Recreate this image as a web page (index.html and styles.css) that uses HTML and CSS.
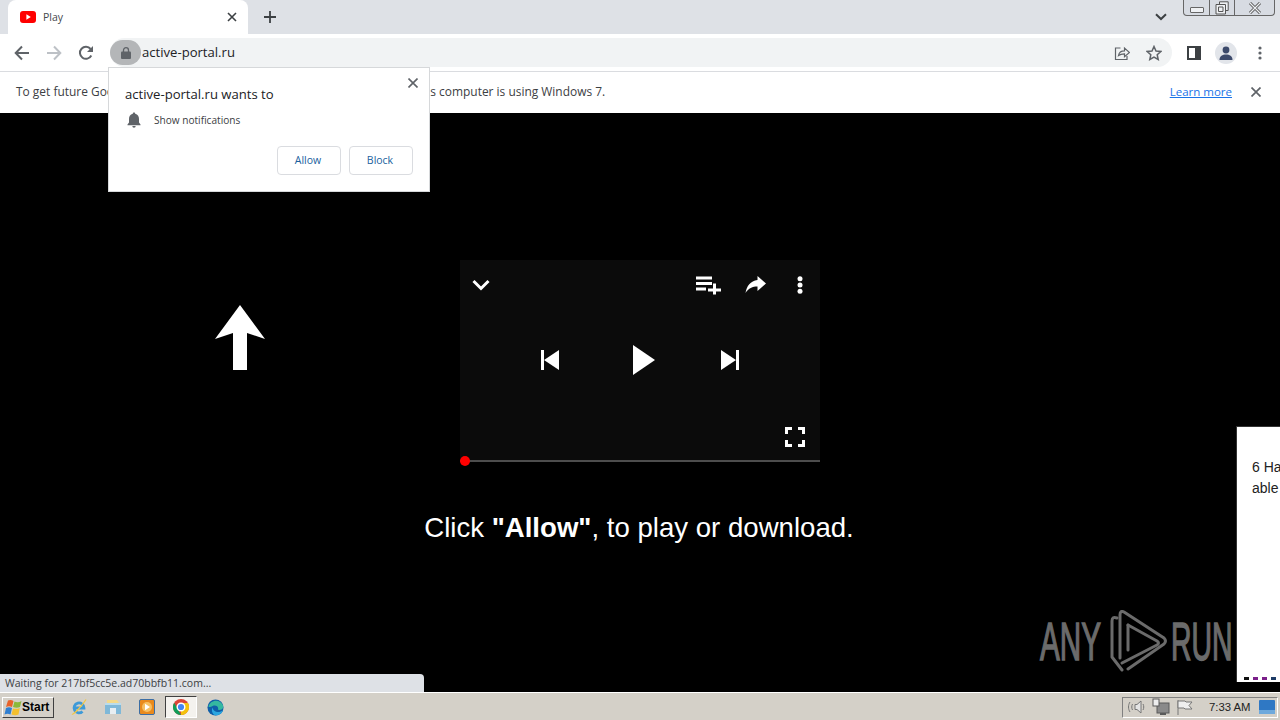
FILE: index.html
```html
<!DOCTYPE html>
<html lang="en">
<head>
    <meta charset="UTF-8">
    <title>Play</title>
    <link rel="stylesheet" href="styles.css">
</head>
<body>
    <!-- Tab strip -->
    <div class="tabstrip">
        <div class="tab">
            <svg class="tab-logo" width="16" height="12" viewBox="0 0 16 12"><rect width="16" height="12" rx="3" fill="#f00"/><path d="M6.400 3.200 10.800 6 6.400 8.800z" fill="#fff"/></svg>
            <span class="tab-title">Play</span>
            <svg class="tab-close" width="10" height="10" viewBox="0 0 10 10"><path d="M1 1l8 8M9 1 1 9" stroke="#3c4043" stroke-width="1.600"/></svg>
        </div>
        <svg class="new-tab" width="12" height="12" viewBox="0 0 12 12"><path d="M6 0v12M0 6h12" stroke="#3c4043" stroke-width="1.800"/></svg>
        <svg class="tab-search" width="12" height="8" viewBox="0 0 12 8"><path d="M1 1.200 6 6l5-4.800" fill="none" stroke="#3c4043" stroke-width="2"/></svg>
        <div class="win-controls">
            <span class="win-btn win-min"><i></i></span>
            <span class="win-btn win-max">
                <svg width="14" height="14" viewBox="0 0 14 14"><path d="M4.500 3V.8h8.700v8.700H11M1 3.500h9.500V13H1zM3.500 6h4.500v4.500H3.500z" fill="#eef0f3" stroke="#555"/></svg>
            </span>
            <span class="win-btn win-close">
                <svg width="14" height="12" viewBox="0 0 14 12"><path d="M2 1l10 10M12 1 2 11" stroke="#555" stroke-width="3"/><path d="M2 1l10 10M12 1 2 11" stroke="#eef0f3" stroke-width="1.200"/></svg>
            </span>
        </div>
    </div>

    <!-- Toolbar -->
    <div class="toolbar">
        <svg class="nav-icon" width="16" height="16" viewBox="0 0 16 16"><path d="M15 8H2M8 1.500 1.700 8 8 14.500" fill="none" stroke="#5f6368" stroke-width="2"/></svg>
        <svg class="nav-icon" width="16" height="16" viewBox="0 0 16 16"><path d="M1 8h13M8 1.500 14.300 8 8 14.500" fill="none" stroke="#bdc1c6" stroke-width="2"/></svg>
        <svg class="nav-icon" width="16" height="16" viewBox="0 0 16 16"><path d="M13.300 10.500A6 6 0 1 1 12.600 4" fill="none" stroke="#5f6368" stroke-width="2"/><path d="M15 1v6H9z" fill="#5f6368"/></svg>
        <div class="omnibox">
            <span class="lock-chip">
                <svg width="10" height="12" viewBox="0 0 10 12"><path d="M2.500 5V3.200a2.500 2.500 0 0 1 5 0V5" fill="none" stroke="#5f6368" stroke-width="1.300"/><rect y="4.600" width="10" height="7.400" rx="1" fill="#5f6368"/></svg>
            </span>
            <span class="url">active-portal.ru</span>
            <svg class="omni-icon" width="16" height="16" viewBox="0 0 16 16"><path d="M6.500 3H1.500v11.500H13V11" fill="none" stroke="#5f6368" stroke-width="1.200"/><path d="M4.500 10.500C5 7.500 7.500 5.800 10.500 5.800V3l5 4.500-5 4.200V8.800c-2.500 0-4.500.4-6 1.700z" fill="none" stroke="#5f6368" stroke-width="1.200"/></svg>
            <svg class="omni-icon" width="16" height="16" viewBox="0 0 16 16"><path d="M8 1.500 10 6l4.800.5-3.600 3.200 1 4.800L8 12l-4.200 2.500 1-4.800L1.200 6.500 6 6z" fill="none" stroke="#5f6368" stroke-width="1.500"/></svg>
        </div>
        <svg class="side-icon" width="14" height="14" viewBox="0 0 14 14"><rect width="14" height="14" fill="#3c4043"/><rect x="2" y="2" width="6" height="10" fill="#fff"/></svg>
        <span class="avatar">
            <svg width="16" height="16" viewBox="0 0 16 16"><circle cx="8" cy="5" r="3.400" fill="#3c4a6b"/><path d="M1.500 15c0-4 3-5.500 6.500-5.500s6.500 1.500 6.500 5.500z" fill="#3c4a6b"/></svg>
        </span>
        <svg class="menu-dots" width="4" height="14" viewBox="0 0 4 14"><circle cx="2" cy="2" r="1.600" fill="#5f6368"/><circle cx="2" cy="7" r="1.600" fill="#5f6368"/><circle cx="2" cy="12" r="1.600" fill="#5f6368"/></svg>
    </div>

    <!-- Infobar -->
    <div class="infobar">
        <span class="info-text">To get future Google Chrome updates, you'll need Windows 10 or later. This computer is using Windows 7.</span>
        <a class="info-link" href="#">Learn more</a>
        <svg class="info-close" width="10" height="10" viewBox="0 0 10 10"><path d="M.5.500l9 9M9.500.500l-9 9" stroke="#5f6368" stroke-width="1.700"/></svg>
    </div>

    <!-- Page content -->
    <main class="stage">
        <div class="player">
            <div class="player-top">
                <svg width="18" height="12" viewBox="0 0 18 12"><path d="M1.500 2 9 9.500 16.500 2" fill="none" stroke="#fff" stroke-width="3"/></svg>
                <div class="player-actions">
                    <svg class="act-queue" width="26" height="20" viewBox="0 0 26 20"><path d="M1 1.500h16v3H1zM1 7h16v3H1zM1 12.500h10v3H1zM18 8.500h3v5h5v3h-5v3h-3v-3h-5v-3h5z" fill="#fff"/></svg>
                    <svg class="act-share" width="21" height="18" viewBox="0 0 21 18"><path d="M12.500 0 21 7.500l-8.500 7.500V10.500C7.500 10.500 3.500 12 .5 17 1.500 10 5.500 5 12.500 4z" fill="#fff"/></svg>
                    <svg width="6" height="18" viewBox="0 0 6 18"><circle cx="3" cy="2.700" r="2.500" fill="#fff"/><circle cx="3" cy="9" r="2.500" fill="#fff"/><circle cx="3" cy="15.300" r="2.500" fill="#fff"/></svg>
                </div>
            </div>
            <div class="player-mid">
                <svg width="18" height="20" viewBox="0 0 18 20"><path d="M0 0h3v20H0zM18 0v20L3 10z" fill="#fff"/></svg>
                <svg class="play-icon" width="22" height="30" viewBox="0 0 22 30"><path d="M0 0l22 15L0 30z" fill="#fff"/></svg>
                <svg width="18" height="20" viewBox="0 0 18 20"><path d="M18 0h-3v20h3zM0 0v20l15-10z" fill="#fff"/></svg>
            </div>
            <div class="player-bottom">
                <svg width="20" height="20" viewBox="0 0 20 20"><path d="M1.500 7V1.500H7M13 1.500h5.500V7M18.500 13v5.500H13M7 18.500H1.500V13" fill="none" stroke="#fff" stroke-width="3"/></svg>
            </div>
            <div class="seekbar"><span class="seek-dot"></span></div>
        </div>
        <p class="caption">Click <b>"Allow"</b>, to play or download.</p>

        <svg class="up-arrow" width="50" height="65" viewBox="0 0 50 65"><path d="M25 0 50 34 32 28V65H18V28L0 34z" fill="#fff"/></svg>

        <div class="side-card">
            <p>6 Ha<br>able</p>
            <div class="side-dashes"><i class="d1"></i><i class="d2"></i><i class="d2"></i><i class="d3"></i></div>
        </div>

        <div class="watermark">
            <span class="wm-text wm-any">ANY</span>
            <svg width="60" height="62" viewBox="0 0 60 62" fill="none" stroke="#6b6b6b" stroke-width="3" stroke-linejoin="round" stroke-linecap="round">
                <path d="M9 8Q4 6 4 11V47L14 60"/>
                <path d="M12 48V5Q12 0 16 2L56 28Q59 31 56 34L20 59"/>
                <path d="M20 15L49 31Q52 33 49 35L14 53"/>
                <path d="M20 15V40"/>
            </svg>
            <span class="wm-text wm-run">RUN</span>
        </div>

        <div class="status-bubble">Waiting for 217bf5cc5e.ad70bbfb11.com...</div>
    </main>

    <!-- Windows taskbar -->
    <div class="taskbar">
        <button class="start-btn">
            <svg width="18" height="17" viewBox="0 0 18 17"><path d="M4 1.500C6 .5 8 1 9.500 2L8 8C6 7 4 7 2 8z" fill="#e8622a"/><path d="M10.500 2.500C12.500 3.500 15 3.500 17.500 2L16 8C14 9 11.500 9 9 8z" fill="#8bb93a"/><path d="M2 9C4 8 6 8 8 9L6.500 15.500C4.500 14.500 2.500 14.500 .5 15.500z" fill="#2f7fd1"/><path d="M9 9.500C11 10 13.500 10 15.800 9L14.500 15.500C12.500 16.500 10 16.500 7.500 15.500z" fill="#f3c02f"/></svg>
            Start
        </button>
        <div class="quick-launch">
            <span class="task-item">
                <svg width="18" height="18" viewBox="0 0 18 18"><path d="M4.500 10h9.500A5 5 0 1 0 12.500 13.500" fill="none" stroke="#3e9ad8" stroke-width="2.800"/><path d="M2 16C3 17.500 12 8 16 1.500" fill="none" stroke="#f2c744" stroke-width="1.300"/></svg>
            </span>
            <span class="task-item">
                <svg width="18" height="18" viewBox="0 0 18 18"><path d="M3 2h10l2 3H3z" fill="#f3d98a"/><path d="M1 5h16v11H1z" fill="#7fb8d8"/><path d="M6 10h6v6H6z" fill="#e8eef2"/><path d="M1 5h16v2H1z" fill="#b9dcec"/></svg>
            </span>
            <span class="task-item">
                <svg width="16" height="16" viewBox="0 0 16 16"><rect x=".5" y=".5" width="15" height="15" rx="1.500" fill="#e98a1d" stroke="#3c6ea5"/><circle cx="8" cy="8" r="5" fill="#f7c063"/><path d="M6 4.800 11 8l-5 3.200z" fill="#fff"/></svg>
            </span>
            <span class="task-item task-active">
                <svg width="16" height="16" viewBox="0 0 16 16"><circle cx="8" cy="8" r="8" fill="#db4437"/><path d="M8 16A8 8 0 0 0 15 4H8z" fill="#f4c20d"/><path d="M1.200 3.800 5 10.500 8 16A8 8 0 0 1 1.200 3.800z" fill="#0f9d58"/><circle cx="8" cy="8" r="3.800" fill="#4285f4" stroke="#fff" stroke-width="1.400"/></svg>
            </span>
            <span class="task-item">
                <svg width="17" height="17" viewBox="0 0 18 18"><circle cx="9" cy="9" r="8.500" fill="#0f5ea8"/><path d="M1.500 8C3 1 14 -1 17 7c.8 3.500-2 5-5.500 4.500C13 8 9 6 6 7.500 4 8.500 3 9 1.500 8z" fill="#35b8a0"/><path d="M6 9c0 4 6 7 11 3-1 3-4 5.500-8 5.500C5 16 4.500 11 6 9z" fill="#2ca6e0"/></svg>
            </span>
        </div>
        <div class="tray">
            <svg width="18" height="16" viewBox="0 0 18 16" fill="none" stroke="#777"><path d="M7 5.500h2L13 2v12L9 10.500H7z" fill="#e4e4e4"/><path d="M15 5c1 2 1 4 0 6M4.500 5c-1 2-1 4 0 6M2 3c-2 3-2 7 0 10"/></svg>
            <svg width="18" height="18" viewBox="0 0 18 18"><rect x="5" y="5" width="12" height="10" fill="#8a8a8a" stroke="#5a5a5a"/><rect x="1" y="1" width="6" height="7" fill="#eee" stroke="#5a5a5a"/><path d="M8 15h6v2H8z" fill="#5a5a5a"/></svg>
            <svg width="17" height="17" viewBox="0 0 17 17" fill="#eee" stroke="#777"><path d="M2 1v15"/><path d="M2 2h7l1 1h6l-3 3.500 3 3.500H9L8 9H2z"/></svg>
            <span class="clock">7:33 AM</span>
            <svg width="16" height="14" viewBox="0 0 16 14"><rect width="16" height="14" rx="1" fill="#2f78c4"/><rect y="10" width="16" height="4" fill="#6ea9dc"/></svg>
        </div>
    </div>

    <!-- Notification prompt -->
    <div class="prompt">
        <svg class="prompt-close" width="10" height="10" viewBox="0 0 10 10"><path d="M.5.500l9 9M9.500.500l-9 9" stroke="#5f6368" stroke-width="1.600"/></svg>
        <div class="prompt-title">active-portal.ru wants to</div>
        <div class="prompt-row">
            <svg width="14" height="16" viewBox="0 0 14 16"><path d="M7 0.500c.8 0 1.200.5 1.200 1.200C11 2.300 12 4.500 12 7v3.500l1.500 2v.7H.5v-.7L2 10.500V7c0-2.500 1-4.700 3.800-5.300C5.800 1 6.200.5 7 .5z" fill="#5f6368"/><path d="M5.300 14h3.400a1.700 1.700 0 0 1-3.400 0z" fill="#5f6368"/></svg>
            <span>Show notifications</span>
        </div>
        <div class="prompt-actions">
            <button class="prompt-btn">Allow</button>
            <button class="prompt-btn">Block</button>
        </div>
    </div>
</body>
</html>
```

FILE: styles.css
```css
body {
    margin: 0;
    height: 720px;
    overflow: hidden;
    display: flex;
    flex-direction: column;
    position: relative;
    font-family: "Open Sans", "Noto Sans", sans-serif;
    background-color: #000;
}

/* Tab strip */
.tabstrip {
    height: 34px;
    flex: none;
    display: flex;
    align-items: center;
    background-color: #dee1e6;
}

.tab {
    width: 240px;
    height: 34px;
    margin-left: 8px;
    padding: 0 11px 0 12px;
    box-sizing: border-box;
    display: flex;
    align-items: center;
    background-color: #fff;
    border-radius: 8px 8px 0 0;
}

.tab-logo {
    flex: none;
}

.tab-title {
    flex: 1;
    margin-left: 7px;
    font-size: 10.500px;
    color: #45494d;
}

.new-tab {
    margin-left: 16px;
}

.tab-search {
    margin-left: auto;
    margin-right: 16px;
}

.win-controls {
    align-self: flex-start;
    width: 92px;
    height: 16px;
    margin-right: 5px;
    display: flex;
    box-sizing: border-box;
    border: 1px solid #666;
    border-top: none;
    border-radius: 0 0 4px 4px;
    background-color: #d7dbe2;
}

.win-btn {
    display: flex;
    align-items: center;
    justify-content: center;
    border-right: 1px solid #666;
    overflow: hidden;
}

.win-min {
    width: 25px;
}

.win-min i {
    width: 12px;
    height: 4px;
    margin-top: 5px;
    border: 1px solid #666;
    border-radius: 1px;
    background-color: #eef0f3;
}

.win-max {
    width: 24px;
}

.win-close {
    flex: 1;
    border-right: none;
}

/* Toolbar */
.toolbar {
    height: 37px;
    flex: none;
    box-sizing: border-box;
    padding-left: 14px;
    display: flex;
    align-items: center;
    background-color: #fff;
}

.nav-icon {
    flex: none;
    margin-right: 16px;
}

.omnibox {
    width: 1062px;
    height: 29px;
    display: flex;
    align-items: center;
    background-color: #f1f3f4;
    border-radius: 15px;
    position: relative;
}

.lock-chip {
    width: 31px;
    height: 25px;
    flex: none;
    display: flex;
    align-items: center;
    justify-content: center;
    background-color: #b4b6b8;
    border-radius: 13px;
}

.url {
    flex: 1;
    margin-left: 1px;
    padding-bottom: 2px;
    font-size: 13.100px;
    color: #202124;
}

.omni-icon {
    margin-right: 16px;
}

.omni-icon:last-child {
    margin-right: 10px;
}

.side-icon {
    margin-left: 15px;
}

.avatar {
    width: 22px;
    height: 22px;
    margin-left: 14px;
    display: flex;
    align-items: center;
    justify-content: center;
    background-color: #e2e5ea;
    border-radius: 50%;
}

.menu-dots {
    margin-left: 21px;
}

/* Infobar */
.infobar {
    height: 42px;
    flex: none;
    box-sizing: border-box;
    padding: 0 19px 2px 16px;
    display: flex;
    align-items: center;
    background-color: #fff;
    border-top: 1px solid #dadce0;
    font-size: 11.950px;
    color: #3c4043;
}

.info-text {
    flex: 1;
}

.info-link {
    color: #1a73e8;
    margin-right: 19px;
    font-size: 11.500px;
}

/* Page content */
.stage {
    flex: 1;
    position: relative;
    padding-top: 147px;
    background-color: #000;
}

.player {
    width: 360px;
    height: 202px;
    margin: 0 auto;
    display: flex;
    flex-direction: column;
    position: relative;
    background-color: #0b0b0b;
}

.player-top {
    height: 50px;
    box-sizing: border-box;
    padding: 0 17px 0 12px;
    display: flex;
    align-items: center;
    justify-content: space-between;
}

.player-actions {
    display: flex;
    align-items: center;
}

.act-queue {
    margin-right: 24px;
}

.act-share {
    margin-right: 31px;
}

.player-mid {
    height: 50px;
    margin-top: 25px;
    padding: 0 81px;
    display: flex;
    align-items: center;
    justify-content: space-between;
}

.play-icon {
    margin-left: 8px;
}

.player-bottom {
    margin-top: 42px;
    padding-right: 15px;
    display: flex;
    justify-content: flex-end;
}

.seekbar {
    position: absolute;
    left: 0;
    right: 0;
    bottom: 0;
    height: 2px;
    background-color: #4d4d4d;
}

.seek-dot {
    position: absolute;
    left: 0;
    top: -4px;
    width: 10px;
    height: 10px;
    background-color: #f00;
    border-radius: 50%;
}

.caption {
    margin: 50px 0 0;
    text-align: center;
    font-family: "Liberation Sans", Arial, sans-serif;
    font-size: 27.600px;
    line-height: 32px;
    color: #fff;
    transform: translateX(-1px);
}

.up-arrow {
    position: absolute;
    left: 215px;
    top: 192px;
}

.side-card {
    position: absolute;
    left: 1237px;
    right: 0;
    top: 313px;
    height: 256px;
    overflow: hidden;
    box-sizing: border-box;
    background-color: #fff;
    border-top: 1px solid #333;
    box-shadow: -1px 0 #333;
    font-family: "Liberation Sans", Arial, sans-serif;
    font-size: 14px;
    line-height: 21px;
    color: #222;
    white-space: nowrap;
}

.side-card p {
    margin: 30px 0 0 15px;
}

.side-dashes {
    position: absolute;
    left: 7px;
    bottom: 2px;
    display: flex;
    gap: 4px;
}

.side-dashes i {
    width: 5px;
    height: 3px;
}

.d1 {
    background-color: #111;
}

.d2 {
    background-color: #7b1f8a;
}

.d3 {
    background-color: #1d3b66;
}

/* Watermark */
.watermark {
    position: absolute;
    left: 1040px;
    top: 497px;
    display: flex;
    align-items: center;
    height: 62px;
}

.watermark svg {
    margin-left: 7px;
    margin-right: 3px;
}

.wm-text {
    width: 61px;
    font-family: "Liberation Sans", Arial, sans-serif;
    font-size: 53px;
    line-height: 62px;
    color: #6b6b6b;
    -webkit-text-stroke: 1.500px #6b6b6b;
    transform-origin: left center;
    white-space: nowrap;
}

.wm-any {
    transform: scaleX(.56) translateY(1px);
}

.wm-run {
    transform: scaleX(.535) translateY(1px);
}

.status-bubble {
    position: absolute;
    left: 0;
    bottom: 0;
    width: 424px;
    height: 18px;
    box-sizing: border-box;
    padding-left: 5px;
    background-color: #dee1e6;
    border-radius: 0 4px 0 0;
    font-size: 10.500px;
    line-height: 18px;
    color: #3c4043;
}

/* Taskbar */
.taskbar {
    height: 28px;
    flex: none;
    box-sizing: border-box;
    padding: 4px 2px 3px;
    display: flex;
    align-items: center;
    background-color: #d4d0c8;
    border-top: 1px solid #fff;
}

.start-btn {
    width: 52px;
    height: 21px;
    padding: 0 0 0 1px;
    display: flex;
    align-items: center;
    background-color: #d4d0c8;
    border: 1px solid;
    border-color: #fff #404040 #404040 #fff;
    font-family: "Liberation Sans", Arial, sans-serif;
    font-size: 12px;
    font-weight: bold;
    color: #000;
}

.quick-launch {
    margin-left: 11px;
    display: flex;
    gap: 6px;
}

.task-item {
    width: 28px;
    height: 22px;
    display: flex;
    align-items: center;
    justify-content: center;
}

.task-active {
    width: 32px;
    margin: 0 -2px;
    background-color: #f4f2ee;
    border: 1px solid;
    border-color: #404040 #fff #fff #404040;
    box-sizing: border-box;
}

.tray {
    width: 156px;
    height: 21px;
    margin-left: auto;
    box-sizing: border-box;
    padding: 0 2px 0 5px;
    display: flex;
    align-items: center;
    gap: 6px;
    border: 1px solid;
    border-color: #808080 #fff #fff #808080;
}

.clock {
    margin: 0 auto 0 10px;
    font-family: "Liberation Sans", Arial, sans-serif;
    font-size: 11.300px;
    color: #222;
}

/* Notification prompt */
.prompt {
    position: absolute;
    left: 108px;
    top: 67px;
    width: 322px;
    height: 125px;
    box-sizing: border-box;
    padding: 17px 16px 0 16px;
    background-color: #fff;
    border: 1px solid #d6d8da;
    color: #202124;
}

.prompt-close {
    position: absolute;
    top: 10px;
    right: 11px;
}

.prompt-title {
    font-size: 13.100px;
    line-height: 18px;
}

.prompt-row {
    margin-top: 9px;
    display: flex;
    align-items: center;
    gap: 13px;
    padding-left: 2px;
    font-size: 10.100px;
    color: #3c4043;
}

.prompt-actions {
    margin-top: 18px;
    display: flex;
    justify-content: flex-end;
    gap: 8px;
}

.prompt-btn {
    width: 64px;
    height: 29px;
    padding: 0 2px 2px 0;
    background-color: #fff;
    border: 1px solid #dadce0;
    border-radius: 4px;
    font-family: "Open Sans", "Noto Sans", sans-serif;
    font-size: 10.500px;
    color: #1a5f9e;
}
```
